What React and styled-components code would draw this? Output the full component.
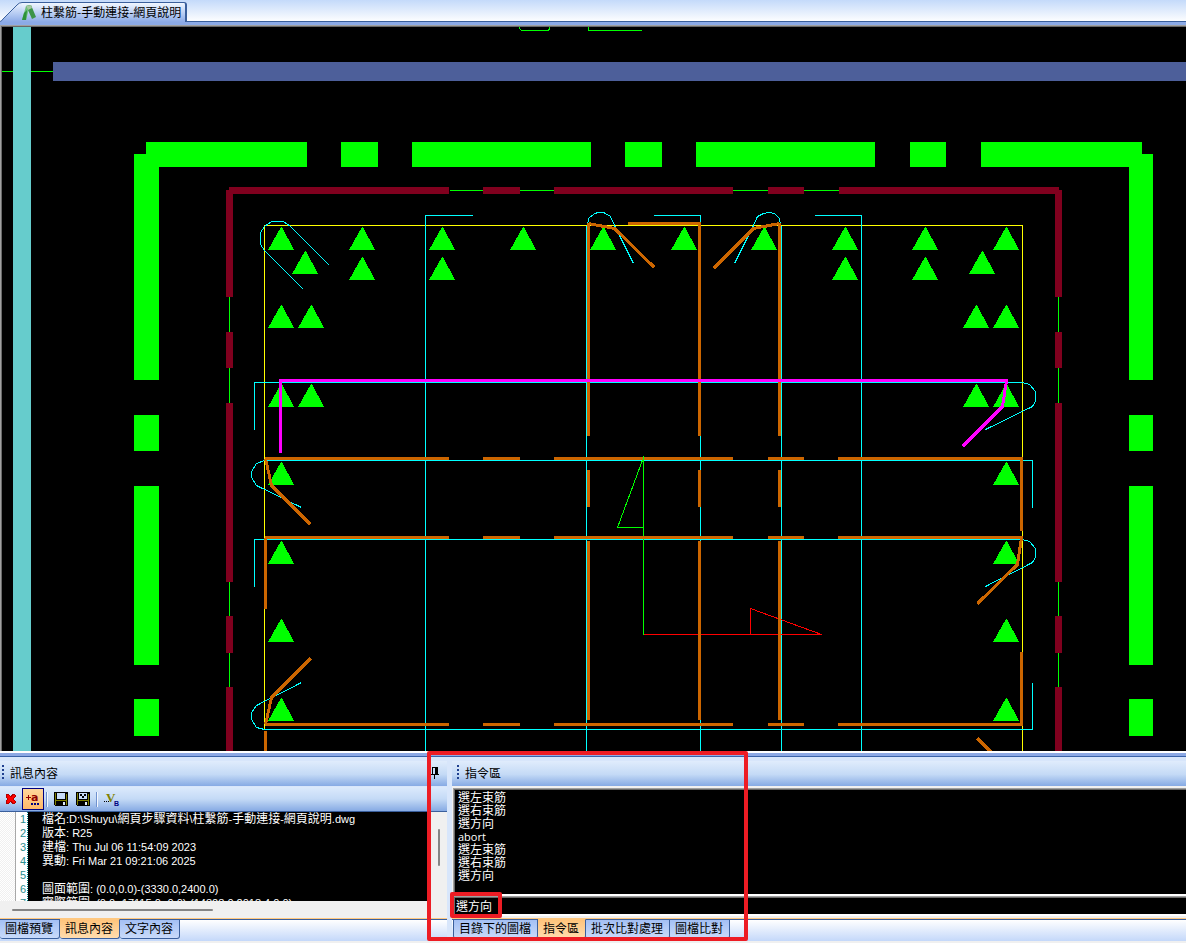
import React, { useState } from 'react';
import styled, { createGlobalStyle, css } from 'styled-components';

const GlobalStyle = createGlobalStyle`
    * {
        box-sizing: border-box;
    }
    body {
        margin: 0;
        overflow: hidden;
        background: #f0f0f0;
        font-family: "Noto Sans CJK TC", "Liberation Sans", sans-serif;
        font-size: 12px;
        line-height: 14px;
        color: #000;
    }
    button, input {
        font: inherit;
        color: inherit;
    }
`;

const Page = styled.div`
    display: flex;
    flex-direction: column;
    height: 100vh;
`;

/* ---------- document tabs ---------- */

const DocStrip = styled.div`
    display: flex;
    align-items: flex-end;
    height: 25px;
    flex: none;
    padding-top: 2px;
    border-bottom: 3px solid #8caae6;
    background: linear-gradient(#c4dafa, #ffffff);
`;

const DocTabEdge = styled.svg`
    display: block;
    width: 22px;
    height: 20px;
    flex: none;
`;

const DocTab = styled.button`
    display: flex;
    align-items: center;
    height: 20px;
    padding: 0 4px 2px 0;
    border: 1px solid #3a5f9c;
    border-width: 1px 2px 0 0;
    border-radius: 0 3px 0 0;
    background: linear-gradient(#f0f6ff, #b4caf2 60%, #8caae6);
    white-space: nowrap;
`;

const DocStripRest = styled.div`
    flex: 1;
    height: 20px;
    border-bottom: 1px solid #3a5f9c;
`;

/* ---------- drawing area ---------- */

const CanvasFrame = styled.div`
    flex: 1;
    min-height: 0;
    padding: 1px 0 0 1px;
    border: 1px solid #a0a0a0;
    border-width: 1px 0 0 1px;
    background: #696969;
`;

const Drawing = styled.svg`
    display: block;
    width: 100%;
    height: 100%;
    background: #000;
`;

/* ---------- docked panels ---------- */

const Dock = styled.div`
    position: relative;
    flex: none;
    border-bottom: 2px solid #f0f0f0;
`;

const Splitter = styled.div`
    height: 6px;
    border-top: 2px solid #fff;
    border-bottom: 1px solid #3a62a8;
    background: #8ca8e4;
`;

const Panels = styled.div`
    display: flex;
    background: #d8e6fb;
`;

const Panel = styled.section`
    position: relative;
    display: flex;
    flex-direction: column;
    min-width: 0;
    ${(props) => (props.$grow ? css`flex: 1; margin-left: 5px;` : css`flex: none; width: 447px;`)}
`;

const PanelHeader = styled.header`
    display: flex;
    align-items: center;
    height: 29px;
    padding: ${(props) => (props.$inset ? '2px 7px 0 4px' : '2px 7px 0 1px')};
    background: linear-gradient(#d8e6fb 4px, #e0ecfc 4px, #c4daf6 60%, #86aae4);
`;

const Grip = styled.span`
    width: 4px;
    height: 15px;
    margin-right: 5px;
    background: repeating-linear-gradient(#1f3f8f 0 2px, transparent 2px 4px) 1px 0 / 2px 14px no-repeat;
`;

const PanelTitle = styled.h2`
    flex: 1;
    margin: 0;
    font-size: 12px;
    font-weight: 400;
`;

const PinButton = styled.button`
    width: 10px;
    height: 14px;
    padding: 0;
    border: 0;
    background: none;
    svg {
        display: block;
    }
`;

const Toolbar = styled.div`
    display: flex;
    align-items: center;
    height: 26px;
    border-top: 1px solid #d8e6fb;
    border-bottom: 1px solid #3a5f9c;
    background: linear-gradient(#dceafc, #c4daf6 50%, #86aae4);
`;

const ToolButton = styled.button`
    display: flex;
    align-items: center;
    justify-content: center;
    width: 22px;
    height: 22px;
    padding: 0;
    border: 1px solid ${(props) => (props.$active ? '#000080' : 'transparent')};
    background: ${(props) => (props.$active ? 'linear-gradient(#ffd79c, #ffb868)' : 'none')};
`;

const Separator = styled.span`
    width: 2px;
    height: 15px;
    margin: 0 2px;
    border-left: 1px solid #6f92cf;
    border-right: 1px solid #f4f8ff;
`;

const MessageRow = styled.div`
    display: flex;
    height: 89px;
`;

const Margin = styled.div`
    width: 16px;
    border-right: 1px solid #a8a8a8;
    background: repeating-conic-gradient(#f0f0f0 0 25%, #fff 0 50%) 0 0 / 2px 2px;
`;

const LineNumbers = styled.div`
    width: 12px;
    padding-right: 1px;
    overflow: hidden;
    border-right: 1px dotted #008080;
    background: #fff;
    color: #2b9191;
    font-family: "Liberation Sans", sans-serif;
    font-size: 11px;
    text-align: right;
`;

const MessageText = styled.div`
    flex: 1;
    overflow: hidden;
    padding-left: 14px;
    background: #000;
    color: #fff;
    font-family: "Liberation Sans", "Noto Sans CJK TC", sans-serif;
    font-size: 11px;
    white-space: pre;
`;

const MessageLine = styled.div`
    height: 14px;
`;

const Han = styled.span`
    font-size: 12px;
    line-height: 12px;
`;

const VScroll = styled.div`
    width: 20px;
    padding: 17px 8px 0 11px;
    background: #f0f0f0;
`;

const HScroll = styled.div`
    height: 17px;
    padding: 8px 0 0 12px;
    background: #f0f0f0;
`;

const Thumb = styled.div`
    border-radius: 1px;
    background: #858585;
    ${(props) => (props.$vertical ? css`width: 2px; height: 37px;` : css`width: 201px; height: 2px;`)}
`;

/* ---------- command panel ---------- */

const Sunken = styled.div`
    position: relative;
    margin-left: 1px;
    padding: 1px 0 0 1px;
    border-top: 1px solid #a0a0a0;
    border-left: 1px solid #a0a0a0;
    border-bottom: 2px solid #fff;
    background: #696969;
`;

const PanelBody = styled.div`
    padding-top: 2px;
    border-bottom: 2px solid #f0f0f0;
    background: #f0f0f0;
`;

const CommandLog = styled.div`
    height: 104px;
    padding: 1px 3px;
    background: #000;
    color: #fff;
    font-family: "Open Sans", "Noto Sans CJK TC", sans-serif;
    line-height: 13px;
`;

const LogLine = styled.div`
    height: 13px;
    font-size: ${(props) => (props.$latin ? '11px' : '12px')};
`;

const CommandInput = styled.input`
    display: block;
    width: 100%;
    height: 16px;
    padding: 0 1px 2px;
    border: 0;
    outline: 0;
    border-radius: 0;
    background: #000;
    color: #fff;
`;

/* ---------- bottom tabs ---------- */

const TabStrip = styled.div`
    display: flex;
    align-items: flex-start;
    height: 23px;
    border-top: 1px solid #ffc880;
    background: linear-gradient(#3a5f9c 1px, #ffffff 1px, #c4d8fa);
    padding-left: ${(props) => (props.$inset ? '1px' : '0')};
`;

const PanelTab = styled.button`
    height: 20px;
    padding: 0 6px 2px 5px;
    border: 1px solid #3a5f9c;
    border-left-width: ${(props) => (props.$first ? '1px' : '0')};
    border-top-color: ${(props) => (props.$active ? '#ffc880' : '#3a5f9c')};
    border-radius: 0 0 3px 3px;
    background: ${(props) => (props.$active
        ? 'linear-gradient(#ffc47c, #ffdcae)'
        : 'linear-gradient(#a4c0f4, #c8dafa)')};
    text-align: left;
    white-space: nowrap;
    line-height: 16px;
`;

/* ---------- red callouts over the dock ---------- */

const Callout = styled.div`
    position: absolute;
    border: 4px solid #ed1c24;
    border-radius: 2px;
    pointer-events: none;
`;

const PanelCallout = styled(Callout)`
    top: 0;
    left: 427px;
    width: 321px;
    height: 190px;
    z-index: 1;
`;

const InputCallout = styled(Callout)`
    top: -5px;
    left: -4px;
    width: 52px;
    height: 26px;
`;

const GREEN = '#00ff00';
const ORANGE = '#cc6600';
const MAROON = '#80001e';

// [start, end] of each dash, shared by opposite sides
const OUTER_X = [[146, 307], [341, 378], [412, 591], [625, 662], [696, 875], [910, 946], [981, 1142]];
const OUTER_Y = [[154, 380], [415, 451], [486, 665], [699, 736]];
const STIRRUP_X = [[229, 449], [483, 520], [554, 733], [768, 804], [839, 1059]];
const STIRRUP_Y = [[190, 297], [332, 368], [403, 582], [616, 653], [687, 760]];
const TIE_X = [[265, 449], [483, 520], [554, 733], [768, 804], [838, 1023]];
const TIE_Y = [[223, 436], [470, 507], [541, 720]];

// rebar rows: top y, centre x list
const BARS = [
    [227, [281, 362, 442, 523, 603, 684, 764, 845, 925, 1006]],
    [257, [362, 442, 845, 925]],
    [251, [305, 982]],
    [305, [281, 311, 976, 1006]],
    [384, [281, 311, 976, 1006]],
    [462, [281, 1006]],
    [541, [281, 1006]],
    [619, [281, 1006]],
    [698, [281, 1006]],
];

const CYAN_LINES = [
    '425,760 425,215 472,215',
    '586,225 586,760',
    '653,215 700,215 700,760',
    '781,225 781,760',
    '814,215 861,215 861,760',
    '254,429 254,382 1022,382 1029,384 1035,391 1035,401 1032,406 985,429',
    '301,507 256,485 251,477 251,471 256,463 264,460 1032,460 1032,507',
    '254,586 254,539 1022,539 1029,541 1035,548 1035,557 1032,562 985,586',
    '301,682 256,705 251,712 251,719 256,727 264,729 1032,729 1032,682',
    '303,289 264,250 260,244 260,232 264,226 271,221 283,221 290,226 329,265',
    '587,225 588,218 594,213 598,212 603,212 610,216 614,225 633,263',
    '734,263 753,225 757,216 763,213 769,212 774,213 779,218 780,225',
];

const ORANGE_LINES = [
    '627,223 700,223',
    '588,223 614,228 654,267',
    '779,223 753,228 713,268',
    '265,458 271,485 310,524',
    '265,724 271,697 310,658',
    '1021,537 1017,564 977,603',
    '977,738 999,760',
    '265,537 265,608',
    '265,730 265,760',
    '1021,458 1021,530',
    '1021,651 1021,724',
];

const SectionDrawing = () => (
    <Drawing viewBox="2 27 1184 724" preserveAspectRatio="xMinYMin slice" shapeRendering="crispEdges" role="img" aria-label="柱繫筋">
        <path d="M2 71h51v1h-51z" fill={GREEN} />
        <rect x="13" y="27" width="18" height="733" fill="#66cccc" />
        <rect x="53" y="62" width="1400" height="19" fill="#4d5f9a" />

        <g fill={GREEN}>
            {OUTER_X.map(([a, b]) => <rect key={a} x={a} y="142" width={b - a} height="25" />)}
            {OUTER_Y.map(([a, b]) => (
                <React.Fragment key={a}>
                    <rect x="134" y={a} width="25" height={b - a} />
                    <rect x="1129" y={a} width="24" height={b - a} />
                </React.Fragment>
            ))}
            {BARS.map(([y, xs]) => xs.map((x) => (
                <polygon key={`${x}-${y}`} points={`${x},${y} ${x + 1},${y} ${x + 13},${y + 23} ${x - 13},${y + 23}`} />
            )))}
        </g>

        <g transform="translate(.5 .5)" fill="none">
            <g stroke={GREEN}>
                <polyline points="519,26 519,28 521,30 548,30 549,28 549,26" />
                <polyline points="588,26 588,30 641,30" />
                <polyline points="449,190 839,190" />
                <polyline points="229,190 229,760" />
                <polyline points="1058,190 1058,760" />
            </g>
            <polyline points="264,729 264,225 1022,225 1022,760" stroke="#ffff00" />
            <g stroke="#00ffff">
                {CYAN_LINES.map((points) => <polyline key={points} points={points} />)}
            </g>
            <polyline points="643,634 643,457 617,527 643,527" stroke={GREEN} />
            <polyline points="643,634 821,634 750,608 750,634" stroke="#ff0000" />
        </g>

        <g fill={ORANGE}>
            {[458, 537, 724].map((y) => TIE_X.map(([a, b]) => (
                <rect key={`${a}-${y}`} x={a} y={y - 1} width={b - a} height="3" />
            )))}
            {[588, 699, 779].map((x) => TIE_Y.map(([a, b]) => (
                <rect key={`${x}-${a}`} x={x - 1} y={a} width="3" height={b - a} />
            )))}
        </g>

        <g transform="translate(.5 .5)" fill="none" strokeWidth="3">
            <g stroke={ORANGE}>
                {ORANGE_LINES.map((points) => <polyline key={points} points={points} />)}
            </g>
            <polyline points="280,452 280,380 1006,380 1002,406 962,446" stroke="#ff00ff" />
        </g>

        <g fill={MAROON}>
            {STIRRUP_X.map(([a, b]) => <rect key={a} x={a} y="187" width={b - a} height="7" />)}
            {STIRRUP_Y.map(([a, b]) => (
                <React.Fragment key={a}>
                    <rect x="226" y={a} width="7" height={b - a} />
                    <rect x="1055" y={a} width="7" height={b - a} />
                </React.Fragment>
            ))}
        </g>
        <path d="M643 456h1v4h-1z" fill={GREEN} />
    </Drawing>
);

const DocIcon = () => (
    <svg width="19" height="18" viewBox="0 0 19 18">
        <path d="M4 3L8 2L4 17H0z" fill="#6cc07c" />
        <path d="M0 17L2 10L5 7L4 17z" fill="#2c9238" />
        <path d="M4 3L9 2L14 14L10 16L6 7z" fill="#3c9448" />
        <path d="M4 3L9 2L10 5L6 7z" fill="#a4c8a0" />
    </svg>
);

const PinIcon = () => (
    <svg width="10" height="14" viewBox="0 0 10 14" shapeRendering="crispEdges">
        <path d="M2 1h6v7h1v1H5v4H4V9H1V8h1z" fill="#000" />
        <path d="M3 2h2v6H3z" fill="#c8dcf8" />
    </svg>
);

const DeleteIcon = () => (
    <svg width="12" height="12" viewBox="0 0 12 12" shapeRendering="crispEdges">
        <path d="M1 2L3 1L6 4L8 1L10 2V4L8 6L10 8V10L8 11L6 8L3 11L1 10V8L3 6L1 4z" fill="#ff0000" stroke="#b00000" />
    </svg>
);

const AppendIcon = () => (
    <svg width="16" height="16" viewBox="0 0 16 16">
        <path d="M1 6h5v1H1zM3 4h1v5H3z" fill="#900000" />
        <text x="6" y="10" fill="#900000" fontFamily="DejaVu Sans" fontSize="11" fontWeight="700">a</text>
        <path d="M6 12h2v2H6zM9 12h2v2H9zM12 12h2v2h-2z" fill="#000080" />
    </svg>
);

const SaveIcon = ({ dotted }) => (
    <svg width="14" height="14" viewBox="0 0 14 14" shapeRendering="crispEdges">
        <path d="M0 0h14v14H1L0 13z" fill="#000" />
        <path d="M1 1h1v12H1zM12 2h1v11h-1zM2 8h10v1H2z" fill="#808000" />
        <path d="M3 1h8v6H3z" fill="#c8dcf8" />
        <path d="M9 10h2v3H9z" fill="#e0ecfc" />
        {dotted && <path d="M4 2h2v2H4zM8 2h2v2H8zM6 4h2v2H6z" fill="#000" />}
    </svg>
);

const VariableIcon = () => (
    <svg width="18" height="16" viewBox="0 0 18 16">
        <path d="M2 10h1v1H2zM4 10h1v1H4zM6 10h1v1H6z" fill="#000" />
        <text x="4" y="11" fill="#808000" fontFamily="Liberation Serif" fontSize="13" fontWeight="700">V</text>
        <text x="12" y="15" fill="#000080" fontFamily="Liberation Sans" fontSize="7" fontWeight="700">B</text>
    </svg>
);

const MESSAGES = [
    '檔名:D:\\Shuyu\\網頁步驟資料\\柱繫筋-手動連接-網頁說明.dwg',
    '版本: R25',
    '建檔: Thu Jul 06 11:54:09 2023',
    '異動: Fri Mar 21 09:21:06 2025',
    '',
    '圖面範圍: (0.0,0.0)-(3330.0,2400.0)',
    '實際範圍: (0.0,-17115.0,-0.0)-(14828.0,2018.4,0.0)',
];

const LOG = ['選左束筋', '選右束筋', '選方向', 'abort', '選左束筋', '選右束筋', '選方向'];

const LEFT_TABS = ['圖檔預覽', '訊息內容', '文字內容'];
const RIGHT_TABS = ['目錄下的圖檔', '指令區', '批次比對處理', '圖檔比對'];

const isHan = (text) => /[\u4e00-\u9fff]/.test(text);

const MixedText = ({ text }) => text.split(/([\u4e00-\u9fff]+)/).map((part, i) => (
    isHan(part) ? <Han key={i}>{part}</Han> : part
));

const Tabs = ({ items, initial, inset }) => {
    const [active, setActive] = useState(initial);

    return (
        <TabStrip role="tablist" $inset={inset}>
            {items.map((item, i) => (
                <PanelTab
                    key={item}
                    role="tab"
                    aria-selected={item === active}
                    $active={item === active}
                    $first={inset && i === 0}
                    onClick={() => setActive(item)}
                >
                    {item}
                </PanelTab>
            ))}
        </TabStrip>
    );
};

const MessagePanel = () => (
    <Panel>
        <PanelHeader>
            <Grip />
            <PanelTitle>訊息內容</PanelTitle>
            <PinButton aria-label="固定"><PinIcon /></PinButton>
        </PanelHeader>
        <Toolbar>
            <ToolButton aria-label="清除"><DeleteIcon /></ToolButton>
            <ToolButton aria-label="附加" $active><AppendIcon /></ToolButton>
            <Separator />
            <ToolButton aria-label="儲存"><SaveIcon /></ToolButton>
            <ToolButton aria-label="另存"><SaveIcon dotted /></ToolButton>
            <Separator />
            <ToolButton aria-label="變數"><VariableIcon /></ToolButton>
        </Toolbar>
        <MessageRow>
            <Margin />
            <LineNumbers>
                {MESSAGES.map((_, i) => <MessageLine key={i}>{i + 1}</MessageLine>)}
            </LineNumbers>
            <MessageText>
                {MESSAGES.map((text, i) => (
                    <MessageLine key={i}><MixedText text={text} /></MessageLine>
                ))}
            </MessageText>
            <VScroll><Thumb $vertical /></VScroll>
        </MessageRow>
        <HScroll><Thumb /></HScroll>
        <Tabs items={LEFT_TABS} initial="訊息內容" />
    </Panel>
);

const CommandPanel = () => {
    const [command, setCommand] = useState('選方向');

    return (
        <Panel $grow>
            <PanelHeader $inset>
                <Grip />
                <PanelTitle>指令區</PanelTitle>
            </PanelHeader>
            <PanelBody>
                <Sunken>
                    <CommandLog>
                        {LOG.map((text, i) => (
                            <LogLine key={i} $latin={!isHan(text)}>{text}</LogLine>
                        ))}
                    </CommandLog>
                </Sunken>
                <Sunken>
                    <CommandInput
                        aria-label="指令"
                        value={command}
                        onChange={(e) => setCommand(e.target.value)}
                    />
                    <InputCallout />
                </Sunken>
            </PanelBody>
            <Tabs items={RIGHT_TABS} initial="指令區" inset />
        </Panel>
    );
};

const App = () => (
    <Page>
        <GlobalStyle />
        <DocStrip role="tablist">
            <DocTabEdge viewBox="0 0 22 20">
                <defs>
                    <linearGradient id="edge" x1="0" y1="0" x2="0" y2="1">
                        <stop offset="0" stopColor="#f0f6ff" />
                        <stop offset=".6" stopColor="#b4caf2" />
                        <stop offset="1" stopColor="#8caae6" />
                    </linearGradient>
                </defs>
                <path d="M0 20L3 17L17 3Q19 0 22 0V20z" fill="url(#edge)" />
                <path d="M0 19.5Q2 19 3 17L17 3Q19 .5 22 .5" fill="none" stroke="#3a5f9c" />
            </DocTabEdge>
            <DocTab role="tab" aria-selected="true">
                <DocIcon />
                柱繫筋-手動連接-網頁說明
            </DocTab>
            <DocStripRest />
        </DocStrip>
        <CanvasFrame>
            <SectionDrawing />
        </CanvasFrame>
        <Dock>
            <Splitter />
            <Panels>
                <MessagePanel />
                <CommandPanel />
            </Panels>
            <PanelCallout />
        </Dock>
    </Page>
);

export default App;
